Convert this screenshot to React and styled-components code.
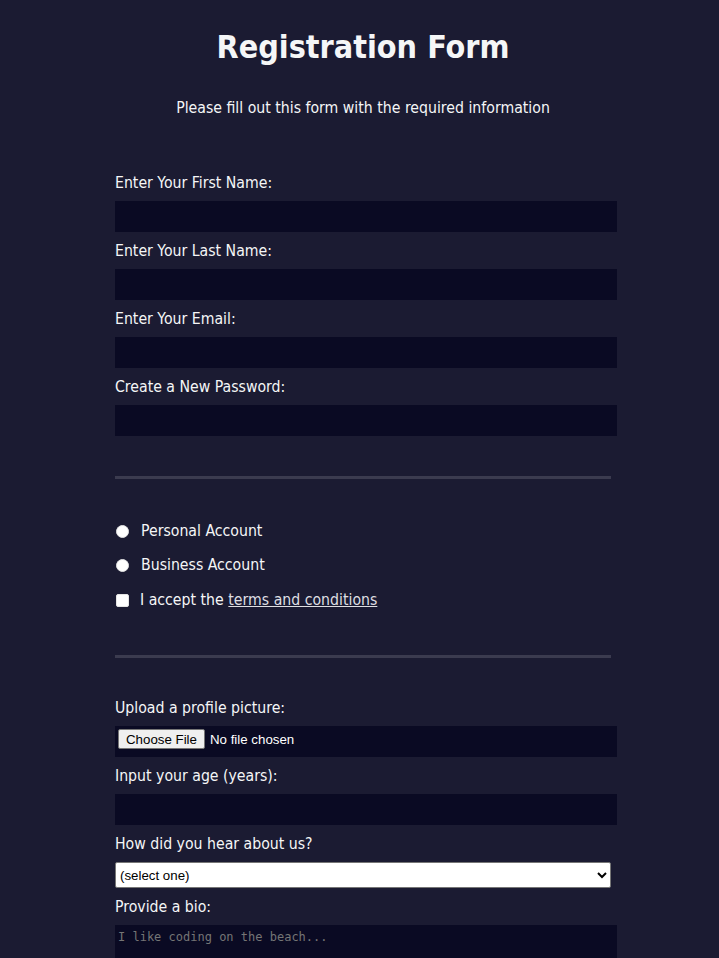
import React from "react";
import styled, { createGlobalStyle } from "styled-components";

const GlobalStyle = createGlobalStyle`
  html, body {
    margin: 0;
    padding: 0;
    background-color: #1b1b32;
  }
  body {
    color: #f5f6f7;
    font-family: "DejaVu Sans Condensed", "DejaVu Sans", sans-serif;
    font-size: 15.7px;
    height: 958px;
    overflow: hidden;
  }
`;

const Page = styled.div`
  padding-left: 7px;
  min-height: 958px;
  box-sizing: border-box;
`;

const Title = styled.h1`
  margin: 28px 0 0;
  font-size: 32px;
  line-height: 38px;
  font-weight: bold;
  text-align: center;
`;

const Subtitle = styled.p`
  margin: 32px 0 0;
  line-height: 20px;
  text-align: center;
`;

const Form = styled.form`
  width: 496px;
  margin: 0 auto;
`;

const Fieldset = styled.fieldset`
  border: none;
  margin: 0;
  padding: ${(p) => p.$pad};
  border-bottom: ${(p) => (p.$last ? "none" : "3px solid #3b3b4f")};
  min-width: 0;
`;

const Label = styled.label`
  display: block;
  line-height: 20px;
  margin-top: 9px;
  &:first-child {
    margin-top: 0;
  }
`;

const TextInput = styled.input`
  display: block;
  box-sizing: content-box;
  width: 100%;
  height: 25px;
  margin: 8px 0 0;
  padding: 2px;
  border: 1px solid #0a0a23;
  background-color: #0a0a23;
  color: #ffffff;
  outline: none;
`;

const FileInput = styled.input`
  display: block;
  box-sizing: content-box;
  width: 100%;
  height: 24px;
  margin: 8px 0 0;
  padding: 2px 2px 3px;
  border: 1px solid #0a0a23;
  background-color: #0a0a23;
  color: #ffffff;
  font-family: "Liberation Sans", Arial, sans-serif;
  font-size: 13.3px;
  line-height: 20px;

  &::file-selector-button {
    font-family: "Liberation Sans", Arial, sans-serif;
    font-size: 13.3px;
    height: 20px;
    padding: 0 7px;
    margin: 0 5px 0 0;
    background-color: #efefef;
    color: #000;
    border: 1px solid #767676;
    border-radius: 2px;
  }
`;

const Select = styled.select`
  display: block;
  box-sizing: border-box;
  width: 100%;
  height: 26px;
  margin: 8px 0 0;
  padding: 0;
  background-color: #ffffff;
  color: #000;
  border: 1px solid #767676;
  border-radius: 2px;
  font-family: "Liberation Sans", Arial, sans-serif;
  font-size: 13.3px;
`;

const TextArea = styled.textarea`
  display: block;
  box-sizing: content-box;
  width: 100%;
  height: 60px;
  margin: 8px 0 0;
  padding: 4px 2px 2px;
  border: 1px solid #0a0a23;
  background-color: #0a0a23;
  color: #ffffff;
  font-family: "DejaVu Sans Mono", "Liberation Mono", monospace;
  font-size: 12px;
  resize: none;
  outline: none;

  &::placeholder {
    color: #757575;
  }
`;

const ChoiceRow = styled.label`
  display: flex;
  align-items: center;
  line-height: 20px;
  margin-top: ${(p) => p.$gap || "0"};
`;

const Radio = styled.input`
  appearance: none;
  width: 13px;
  height: 13px;
  margin: 0 12px 0 1px;
  border-radius: 50%;
  background-color: #ffffff;
  border: 1px solid #e4e4e4;
  box-sizing: border-box;
  flex: none;
`;

const Checkbox = styled.input`
  appearance: none;
  width: 13px;
  height: 13px;
  margin: 0 11px 0 1px;
  border-radius: 2px;
  background-color: #ffffff;
  border: 1px solid #e4e4e4;
  box-sizing: border-box;
  flex: none;
`;

const Link = styled.a`
  color: #dfdfe2;
  margin-left: 0.3em;
`;

const App = () => {
  return (
    <>
      <GlobalStyle />
      <Page>
        <Title>Registration Form</Title>
        <Subtitle>Please fill out this form with the required information</Subtitle>
        <Form onSubmit={(e) => e.preventDefault()}>
          <Fieldset $pad="55px 0 40px">
            <Label>
              Enter Your First Name:
              <TextInput type="text" />
            </Label>
            <Label>
              Enter Your Last Name:
              <TextInput type="text" />
            </Label>
            <Label>
              Enter Your Email:
              <TextInput type="email" />
            </Label>
            <Label>
              Create a New Password:
              <TextInput type="password" />
            </Label>
          </Fieldset>

          <Fieldset $pad="42px 0 45px">
            <ChoiceRow>
              <Radio type="radio" name="account-type" />
              Personal Account
            </ChoiceRow>
            <ChoiceRow $gap="14px">
              <Radio type="radio" name="account-type" />
              Business Account
            </ChoiceRow>
            <ChoiceRow $gap="15px">
              <Checkbox type="checkbox" />
              I accept the
              <Link href="#">terms and conditions</Link>
            </ChoiceRow>
          </Fieldset>

          <Fieldset $pad="40px 0 32px" $last>
            <Label>
              Upload a profile picture:
              <FileInput type="file" />
            </Label>
            <Label>
              Input your age (years):
              <TextInput type="number" />
            </Label>
            <Label>
              How did you hear about us?
              <Select defaultValue="">
                <option value="">(select one)</option>
                <option value="1">freeCodeCamp News</option>
                <option value="2">freeCodeCamp YouTube Channel</option>
                <option value="3">freeCodeCamp Forum</option>
                <option value="4">Other</option>
              </Select>
            </Label>
            <Label>
              Provide a bio:
              <TextArea rows="3" cols="30" placeholder="I like coding on the beach..." />
            </Label>
          </Fieldset>
        </Form>
      </Page>
    </>
  );
};

export default App;
